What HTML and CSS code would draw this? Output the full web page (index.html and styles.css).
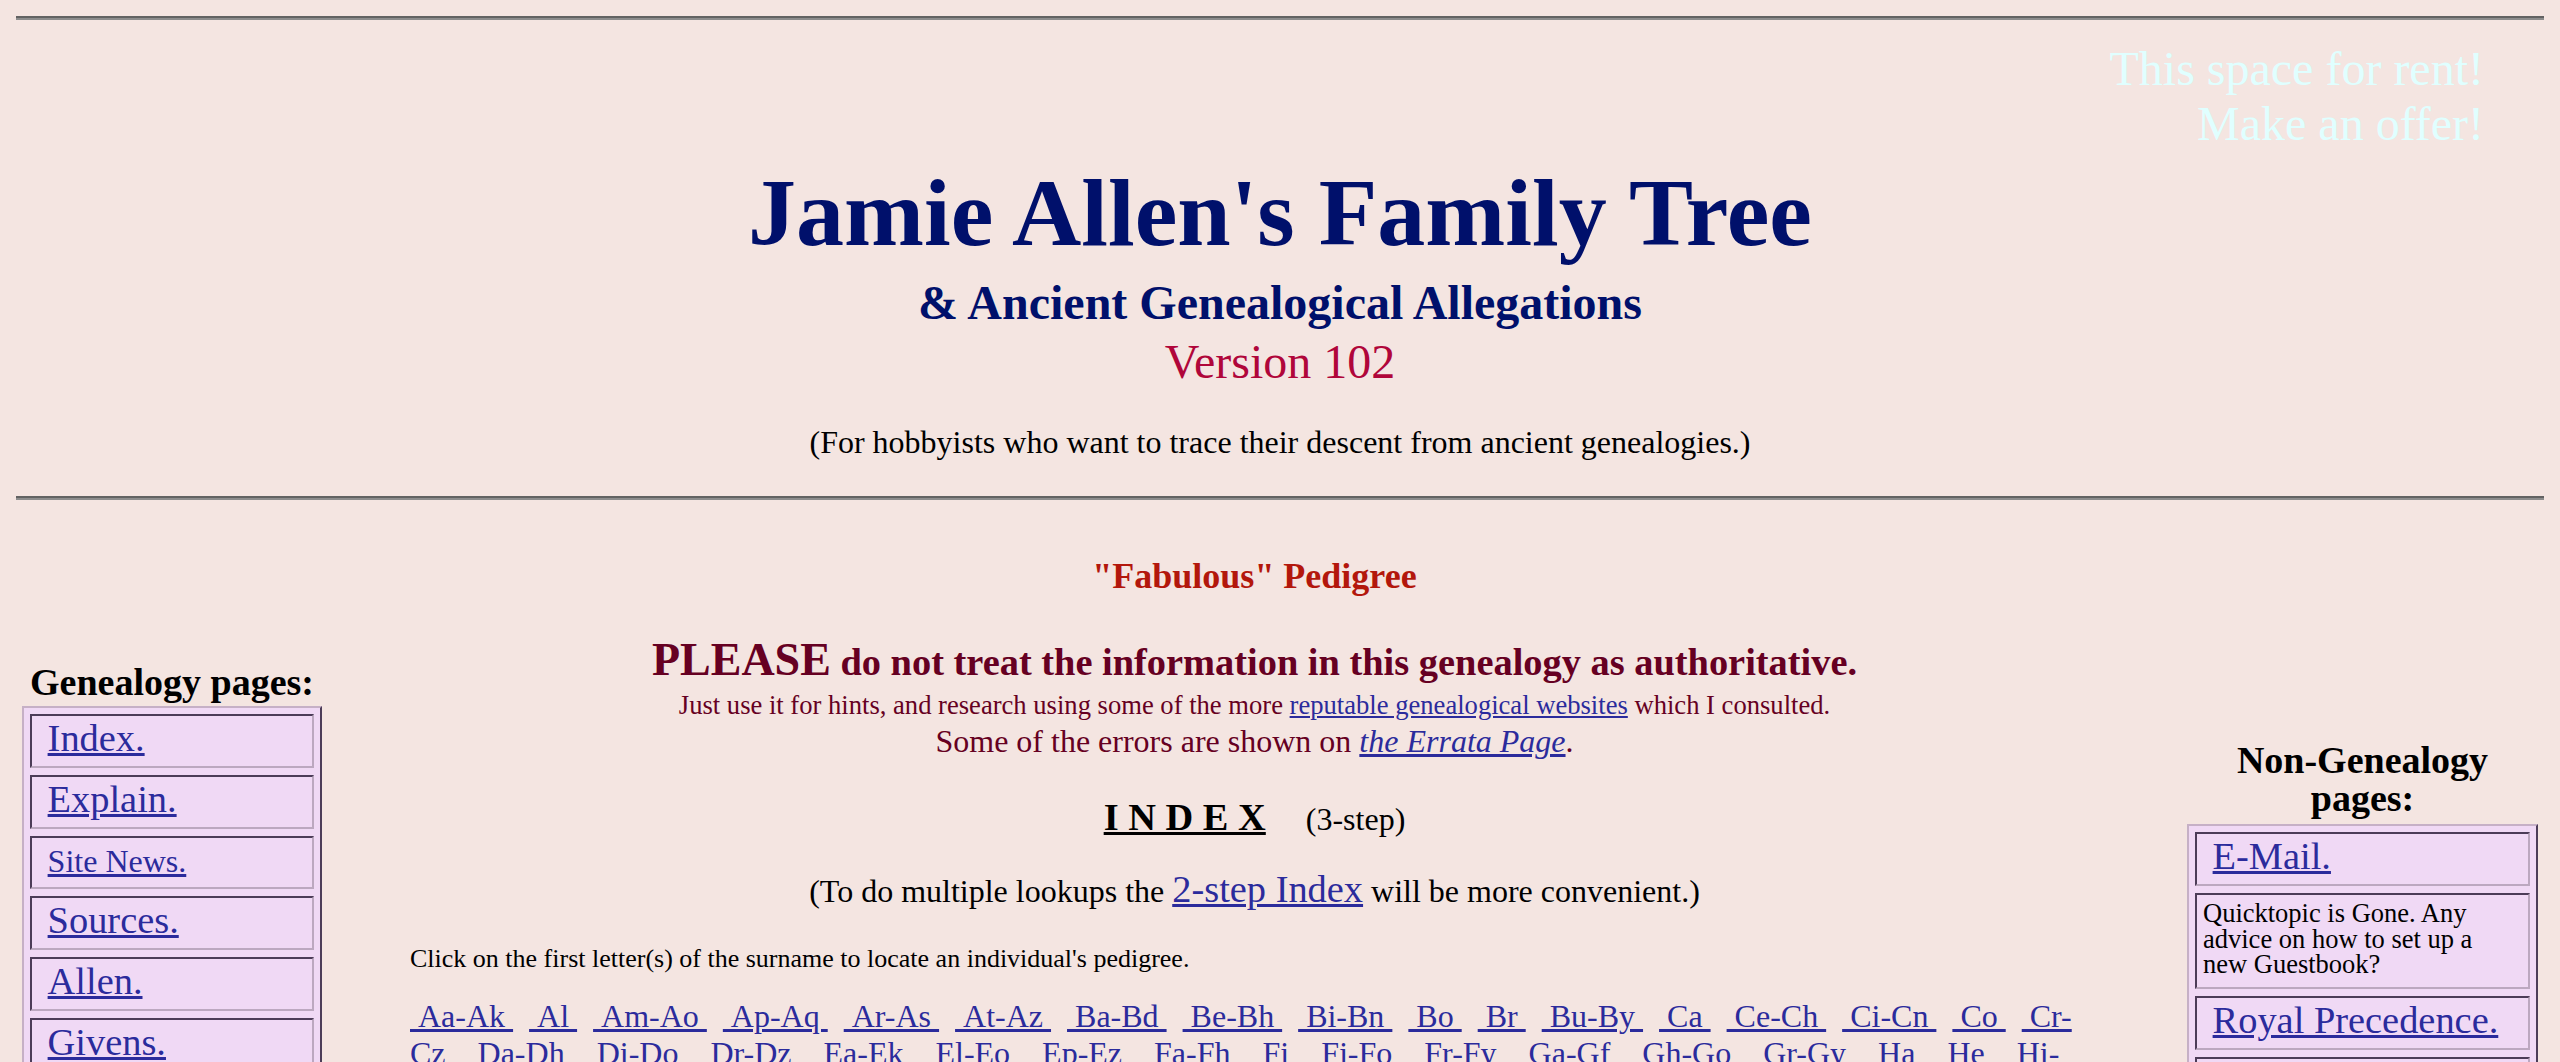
FILE: index.html
```html
<!DOCTYPE html>
<html lang="en">
<head>
<meta charset="utf-8">
<title>Jamie Allen's Family Tree</title>
<link rel="stylesheet" href="styles.css">
</head>
<body>
<hr class="rule">
<div class="rent">This space for rent!<br>Make an offer!</div>
<header class="masthead">
  <h1 class="title">Jamie Allen's Family Tree</h1>
  <div class="subtitle">&amp; Ancient Genealogical Allegations</div>
  <div class="version">Version 102</div>
  <p class="tagline">(For hobbyists who want to trace their descent from ancient genealogies.)</p>
</header>
<hr class="rule rule-bottom">
<main class="layout">
  <nav class="side side-left">
    <h3 class="side-head">Genealogy pages:</h3>
    <div class="menu">
      <div class="cell">&nbsp;<a href="#">Index.</a></div>
      <div class="cell">&nbsp;<a href="#">Explain.</a></div>
      <div class="cell cell-small">&nbsp;<a href="#" class="small-link">Site News.</a></div>
      <div class="cell">&nbsp;<a href="#">Sources.</a></div>
      <div class="cell">&nbsp;<a href="#">Allen.</a></div>
      <div class="cell">&nbsp;<a href="#">Givens.</a></div>
    </div>
  </nav>
  <section class="center">
    <h2 class="fab">"Fabulous" Pedigree</h2>
    <p class="warn"><span class="big">PLEASE</span> do not treat the information in this genealogy as authoritative.</p>
    <p class="hint">Just use it for hints, and research using some of the more <a href="#">reputable genealogical websites</a> which I consulted.</p>
    <p class="errata">Some of the errors are shown on <a href="#"><i>the Errata Page</i></a>.</p>
    <p class="index-line"><span class="index-word">I N D E X</span>&nbsp;&nbsp;&nbsp;&nbsp;&nbsp;(3-step)</p>
    <p class="lookup">(To do multiple lookups the <a href="#">2-step Index</a> will be more convenient.)</p>
    <div class="alpha-block">
      <p class="instr">Click on the first letter(s) of the surname to locate an individual's pedigree.</p>
      <p class="alpha"><a href="#">&nbsp;Aa-Ak&nbsp;</a>&nbsp; <a href="#">&nbsp;Al&nbsp;</a>&nbsp; <a href="#">&nbsp;Am-Ao&nbsp;</a>&nbsp; <a href="#">&nbsp;Ap-Aq&nbsp;</a>&nbsp; <a href="#">&nbsp;Ar-As&nbsp;</a>&nbsp; <a href="#">&nbsp;At-Az&nbsp;</a>&nbsp; <a href="#">&nbsp;Ba-Bd&nbsp;</a>&nbsp; <a href="#">&nbsp;Be-Bh&nbsp;</a>&nbsp; <a href="#">&nbsp;Bi-Bn&nbsp;</a>&nbsp; <a href="#">&nbsp;Bo&nbsp;</a>&nbsp; <a href="#">&nbsp;Br&nbsp;</a>&nbsp; <a href="#">&nbsp;Bu-By&nbsp;</a>&nbsp; <a href="#">&nbsp;Ca&nbsp;</a>&nbsp; <a href="#">&nbsp;Ce-Ch&nbsp;</a>&nbsp; <a href="#">&nbsp;Ci-Cn&nbsp;</a>&nbsp; <a href="#">&nbsp;Co&nbsp;</a>&nbsp; <a href="#">&nbsp;Cr-Cz&nbsp;</a>&nbsp; <a href="#">&nbsp;Da-Dh&nbsp;</a>&nbsp; <a href="#">&nbsp;Di-Do&nbsp;</a>&nbsp; <a href="#">&nbsp;Dr-Dz&nbsp;</a>&nbsp; <a href="#">&nbsp;Ea-Ek&nbsp;</a>&nbsp; <a href="#">&nbsp;El-Eo&nbsp;</a>&nbsp; <a href="#">&nbsp;Ep-Ez&nbsp;</a>&nbsp; <a href="#">&nbsp;Fa-Fh&nbsp;</a>&nbsp; <a href="#">&nbsp;Fi&nbsp;</a>&nbsp; <a href="#">&nbsp;Fj-Fo&nbsp;</a>&nbsp; <a href="#">&nbsp;Fr-Fy&nbsp;</a>&nbsp; <a href="#">&nbsp;Ga-Gf&nbsp;</a>&nbsp; <a href="#">&nbsp;Gh-Go&nbsp;</a>&nbsp; <a href="#">&nbsp;Gr-Gy&nbsp;</a>&nbsp; <a href="#">&nbsp;Ha&nbsp;</a>&nbsp; <a href="#">&nbsp;He&nbsp;</a>&nbsp; <a href="#">&nbsp;Hi-Hz&nbsp;</a></p>
    </div>
  </section>
  <aside class="side side-right">
    <h3 class="side-head">Non-Genealogy pages:</h3>
    <div class="menu">
      <div class="cell">&nbsp;<a href="#">E-Mail.</a></div>
      <div class="cell cell-note">Quicktopic is Gone. Any advice on how to set up a new Guestbook?</div>
      <div class="cell">&nbsp;<a href="#">Royal Precedence.</a></div>
      <div class="cell">&nbsp;<a href="#">Links.</a></div>
    </div>
  </aside>
</main>
</body>
</html>
```
FILE: styles.css
```css
html {
  background: #f4e5e1;
}

body {
  margin: 16px;
  background: #f4e5e1;
  color: #000;
  font-family: "Liberation Serif", "Times New Roman", Times, serif;
}

a {
  color: #2b2b9c;
  text-decoration: underline;
}

.rule {
  margin: 0;
  height: 0;
  border: 0;
  border-top: 2px solid #626262;
  border-bottom: 2px solid #8c8c8c;
}

.rule-bottom {
  margin-top: 35px;
}

.rent {
  margin: 21px 60px 0 0;
  text-align: right;
  font-size: 48px;
  line-height: 55px;
  color: #e0ffff;
}

.masthead {
  text-align: center;
}

.title {
  margin: 7px 0 0;
  font-size: 96px;
  line-height: 110px;
  font-weight: bold;
  color: #00106b;
}

.subtitle {
  margin: 7px 0 0;
  font-size: 48px;
  line-height: 55px;
  font-weight: bold;
  color: #00106b;
}

.version {
  margin: 4px 0 0;
  font-size: 48px;
  line-height: 55px;
  color: #b0063a;
}

.tagline {
  margin: 35px 0 0;
  font-size: 32px;
  line-height: 37px;
}

/* three column area */
.layout {
  display: grid;
  grid-template-columns: 300px 1fr 351px;
  column-gap: 8px;
  padding: 0 6px;
  align-items: start;
}

.side-left {
  margin-top: 163px;
}

.side-right {
  margin-top: 241px;
}

.side-head {
  margin: 0;
  text-align: center;
  font-size: 38px;
  line-height: 38px;
  font-weight: bold;
}

.menu {
  display: flex;
  flex-direction: column;
  gap: 7px;
  margin-top: 5px;
  padding: 6px;
  background: #f0d9f5;
  border: 2px solid;
  border-color: #c6b0c6 #4c3c58 #4c3c58 #c6b0c6;
}

.side-right .menu {
  margin-top: 7px;
}

.cell {
  box-sizing: border-box;
  height: 54px;
  padding: 3px 6px 0;
  background: #f0d9f5;
  border: 2px solid;
  border-color: #4c3c58 #bca8c0 #bca8c0 #4c3c58;
  font-size: 38.4px;
  line-height: 38px;
  white-space: nowrap;
}

.cell-small {
  height: 53px;
  padding-top: 2px;
}

.small-link {
  font-size: 32px;
}

.cell-note {
  height: 96px;
  padding: 6px 8px 0 6px;
  font-size: 26.5px;
  line-height: 25.5px;
  white-space: normal;
}

/* center column */
.center {
  margin-top: 56px;
  text-align: center;
}

.fab {
  margin: 0;
  font-size: 36px;
  line-height: 41px;
  font-weight: bold;
  color: #b3170c;
}

.warn {
  margin: 36px 0 0;
  font-size: 38.4px;
  line-height: 44px;
  font-weight: bold;
  color: #660022;
}

.warn .big {
  font-size: 46px;
  line-height: 53px;
}

.hint {
  margin: 4px 0 0;
  font-size: 26.6px;
  line-height: 30px;
  color: #660022;
}

.errata {
  margin: 3px 0 0;
  font-size: 32px;
  line-height: 37px;
  color: #660022;
}

.index-line {
  margin: 35px 0 0;
  font-size: 32px;
  line-height: 37px;
}

.index-word {
  font-size: 38.4px;
  line-height: 44px;
  font-weight: bold;
  text-decoration: underline;
}

.lookup {
  margin: 28px 0 0;
  font-size: 32px;
  line-height: 37px;
}

.lookup a {
  font-size: 38.4px;
  line-height: 44px;
}

.alpha-block {
  margin: 0 80px;
  text-align: left;
}

.instr {
  margin: 33px 0 0;
  font-size: 26px;
  line-height: 30px;
}

.alpha {
  margin: 24px 0 0;
  font-size: 32px;
  line-height: 37px;
}
```
